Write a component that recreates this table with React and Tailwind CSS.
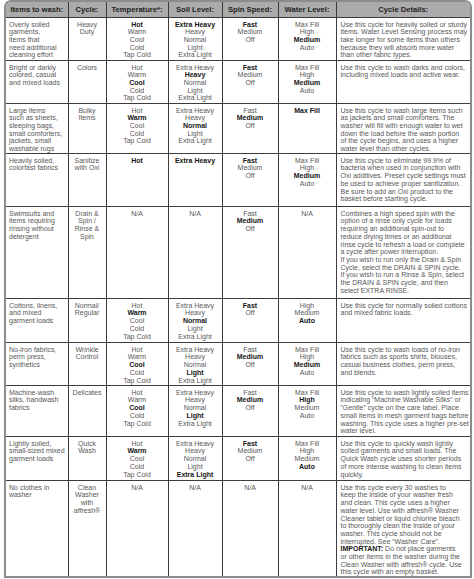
// App.jsx - washer cycle guide table
const cols = [62, 38, 62, 54, 56, 58, 134];
const headers = ["Items to wash:", "Cycle:", "Temperature*:", "Soil Level:", "Spin Speed:", "Water Level:", "Cycle Details:"];

const TEMP = ["Hot", "Warm", "Cool", "Cold", "Tap Cold"];
const SOIL = ["Extra Heavy", "Heavy", "Normal", "Light", "Extra Light"];
const SPIN = ["Fast", "Medium", "Off"];
const WATER = ["Max Fill", "High", "Medium", "Auto"];

const rows = [
  {
    h: 43,
    items: ["Overly soiled", "garments,", "items that", "need additional", "cleaning effort"],
    cycle: ["Heavy", "Duty"],
    temp: [TEMP, 0], soil: [SOIL, 0], spin: [SPIN, 0], water: [WATER, 2],
    details: [
      "Use this cycle for heavily soiled or sturdy",
      "items. Water Level Sensing process may",
      "take longer for some items than others",
      "because they will absorb more water",
      "than other fabric types.",
    ],
  },
  {
    h: 43,
    items: ["Bright or darkly", "colored, casual", "and mixed loads"],
    cycle: ["Colors"],
    temp: [TEMP, 2], soil: [SOIL, 1], spin: [SPIN, 0], water: [WATER, 2],
    details: ["Use this cycle to wash darks and colors,", "including mixed loads and active wear."],
  },
  {
    h: 50,
    items: ["Large items", "such as sheets,", "sleeping bags,", "small comforters,", "jackets, small", "washable rugs"],
    cycle: ["Bulky", "Items"],
    temp: [TEMP, 1], soil: [SOIL, 2], spin: [SPIN, 1], water: [["Max Fill"], 0],
    details: [
      "Use this cycle to wash large items such",
      "as jackets and small comforters. The",
      "washer will fill with enough water to wet",
      "down the load before the wash portion",
      "of the cycle begins, and uses a higher",
      "water level than other cycles.",
    ],
  },
  {
    h: 53,
    items: ["Heavily soiled,", "colorfast fabrics"],
    cycle: ["Sanitize", "with Oxi"],
    temp: [["Hot"], 0], soil: [["Extra Heavy"], 0], spin: [SPIN, 0], water: [WATER, 2],
    details: [
      "Use this cycle to eliminate 99.9% of",
      "bacteria when used in conjunction with",
      "Oxi additives. Preset cycle settings must",
      "be used to achieve proper sanitization.",
      "Be sure to add an Oxi product to the",
      "basket before starting cycle.",
    ],
  },
  {
    h: 92,
    items: ["Swimsuits and", "items requiring", "rinsing without", "detergent"],
    cycle: ["Drain &", "Spin /", "Rinse &", "Spin"],
    temp: [["N/A"], -1], soil: [["N/A"], -1], spin: [SPIN, 1], water: [["N/A"], -1],
    details: [
      "Combines a high speed spin with the",
      "option of a rinse only cycle for loads",
      "requiring an additional spin-out to",
      "reduce drying times or an additional",
      "rinse cycle to refresh a load or complete",
      "a cycle after power interruption.",
      "If you wish to run only the Drain & Spin",
      "Cycle, select the DRAIN & SPIN cycle.",
      "If you wish to run a Rinse & Spin, select",
      "the DRAIN & SPIN cycle, and then",
      "select EXTRA RINSE.",
    ],
  },
  {
    h: 44,
    items: ["Cottons, linens,", "and mixed", "garment loads"],
    cycle: ["Normal/", "Regular"],
    temp: [TEMP, 1], soil: [SOIL, 2], spin: [["Fast", "Off"], 0], water: [["High", "Medium", "Auto"], 2],
    details: ["Use this cycle for normally soiled cottons", "and mixed fabric loads."],
  },
  {
    h: 43,
    items: ["No-iron fabrics,", "perm press,", "synthetics"],
    cycle: ["Wrinkle", "Control"],
    temp: [TEMP, 2], soil: [SOIL, 3], spin: [SPIN, 1], water: [WATER, 2],
    details: [
      "Use this cycle to wash loads of no-iron",
      "fabrics such as sports shirts, blouses,",
      "casual business clothes, perm press,",
      "and blends.",
    ],
  },
  {
    h: 51,
    items: ["Machine-wash", "silks, handwash", "fabrics"],
    cycle: ["Delicates"],
    temp: [TEMP, 2], soil: [SOIL, 3], spin: [SPIN, 1], water: [WATER, 1],
    details: [
      "Use this cycle to wash lightly soiled items",
      "indicating \u201cMachine Washable Silks\u201d or",
      "\u201cGentle\u201d cycle on the care label. Place",
      "small items in mesh garment bags before",
      "washing. This cycle uses a higher pre-set",
      "water level.",
    ],
  },
  {
    h: 44,
    items: ["Lightly soiled,", "small-sized mixed", "garment loads"],
    cycle: ["Quick", "Wash"],
    temp: [TEMP, 1], soil: [SOIL, 4], spin: [SPIN, 0], water: [WATER, 3],
    details: [
      "Use this cycle to quickly wash lightly",
      "soiled garments and small loads. The",
      "Quick Wash cycle uses shorter periods",
      "of more intense washing to clean items",
      "quickly.",
    ],
  },
  {
    h: 96,
    items: ["No clothes in", "washer"],
    cycle: ["Clean", "Washer", "with", "affresh\u00ae"],
    temp: [["N/A"], -1], soil: [["N/A"], -1], spin: [["N/A"], -1], water: [["N/A"], -1],
    details: [
      "Use this cycle every 30 washes to",
      "keep the inside of your washer fresh",
      "and clean. This cycle uses a higher",
      "water level. Use with affresh\u00ae Washer",
      "Cleaner tablet or liquid chlorine bleach",
      "to thoroughly clean the inside of your",
      "washer. This cycle should not be",
      "interrupted. See \u201cWasher Care\u201d.",
      ["IMPORTANT:", " Do not place garments"],
      "or other items in the washer during the",
      "Clean Washer with affresh\u00ae cycle. Use",
      "this cycle with an empty basket.",
    ],
  },
];

function cellBorder(ci, last) {
  const r = ci < cols.length - 1 ? "border-r border-r-[#3c3c3c]" : "";
  const b = last ? "" : "border-b border-b-[#3c3c3c]";
  return `${r} ${b}`;
}

function Lines({ list, center }) {
  return (
    <div className={center ? "text-center" : "text-left"}>
      {list.map((l, i) => (
        <div key={i} className="whitespace-nowrap">{l}</div>
      ))}
    </div>
  );
}

function Options({ opt }) {
  const [list, bold] = opt;
  return (
    <div className="text-center">
      {list.map((l, i) => (
        <div key={i} className={i === bold ? "font-bold text-[#161616]" : ""}>{l}</div>
      ))}
    </div>
  );
}

export default function App() {
  return (
    <div className="w-[474px] h-[579px] bg-white pt-0 pl-[4px]" style={{ fontFamily: '"Liberation Sans", Arial, sans-serif' }}>
      <div className="w-[468px] border-2 border-[#8c8c8c] rounded-t-[7px] overflow-hidden">
        <table className="table-fixed border-collapse w-[464px] text-[7px] leading-[7.7px] text-[#585858]">
          <colgroup>
            {cols.map((w, i) => (
              <col key={i} style={{ width: w }} />
            ))}
          </colgroup>
          <thead>
            <tr className="h-[15px] bg-[#ababab]">
              {headers.map((t, i) => (
                <th
                  key={i}
                  className={`${cellBorder(i, false)} p-0 text-center align-middle font-bold text-[7.6px] leading-[9px] text-[#222] whitespace-nowrap`}
                >
                  {t}
                </th>
              ))}
            </tr>
          </thead>
          <tbody>
            {rows.map((r, ri) => {
              const last = ri === rows.length - 1;
              return (
                <tr key={ri} style={{ height: r.h }}>
                  <td className={`${cellBorder(0, last)} align-top pl-[3px] pt-[3px] pr-0`}>
                    <Lines list={r.items} />
                  </td>
                  <td className={`${cellBorder(1, last)} align-top pt-[3px] px-0`}>
                    <Lines list={r.cycle} center />
                  </td>
                  <td className={`${cellBorder(2, last)} align-top pt-[3px] px-0`}>
                    <Options opt={r.temp} />
                  </td>
                  <td className={`${cellBorder(3, last)} align-top pt-[3px] px-0`}>
                    <Options opt={r.soil} />
                  </td>
                  <td className={`${cellBorder(4, last)} align-top pt-[3px] px-0`}>
                    <Options opt={r.spin} />
                  </td>
                  <td className={`${cellBorder(5, last)} align-top pt-[3px] px-0`}>
                    <Options opt={r.water} />
                  </td>
                  <td className={`${cellBorder(6, last)} align-top pt-[3px] pl-[4px] pr-0`}>
                    {r.details.map((l, i) => (
                      <div key={i} className="whitespace-nowrap">
                        {Array.isArray(l) ? (
                          <>
                            <span className="font-bold text-[#161616]">{l[0]}</span>
                            {l[1]}
                          </>
                        ) : (
                          l
                        )}
                      </div>
                    ))}
                  </td>
                </tr>
              );
            })}
          </tbody>
        </table>
      </div>
    </div>
  );
}
